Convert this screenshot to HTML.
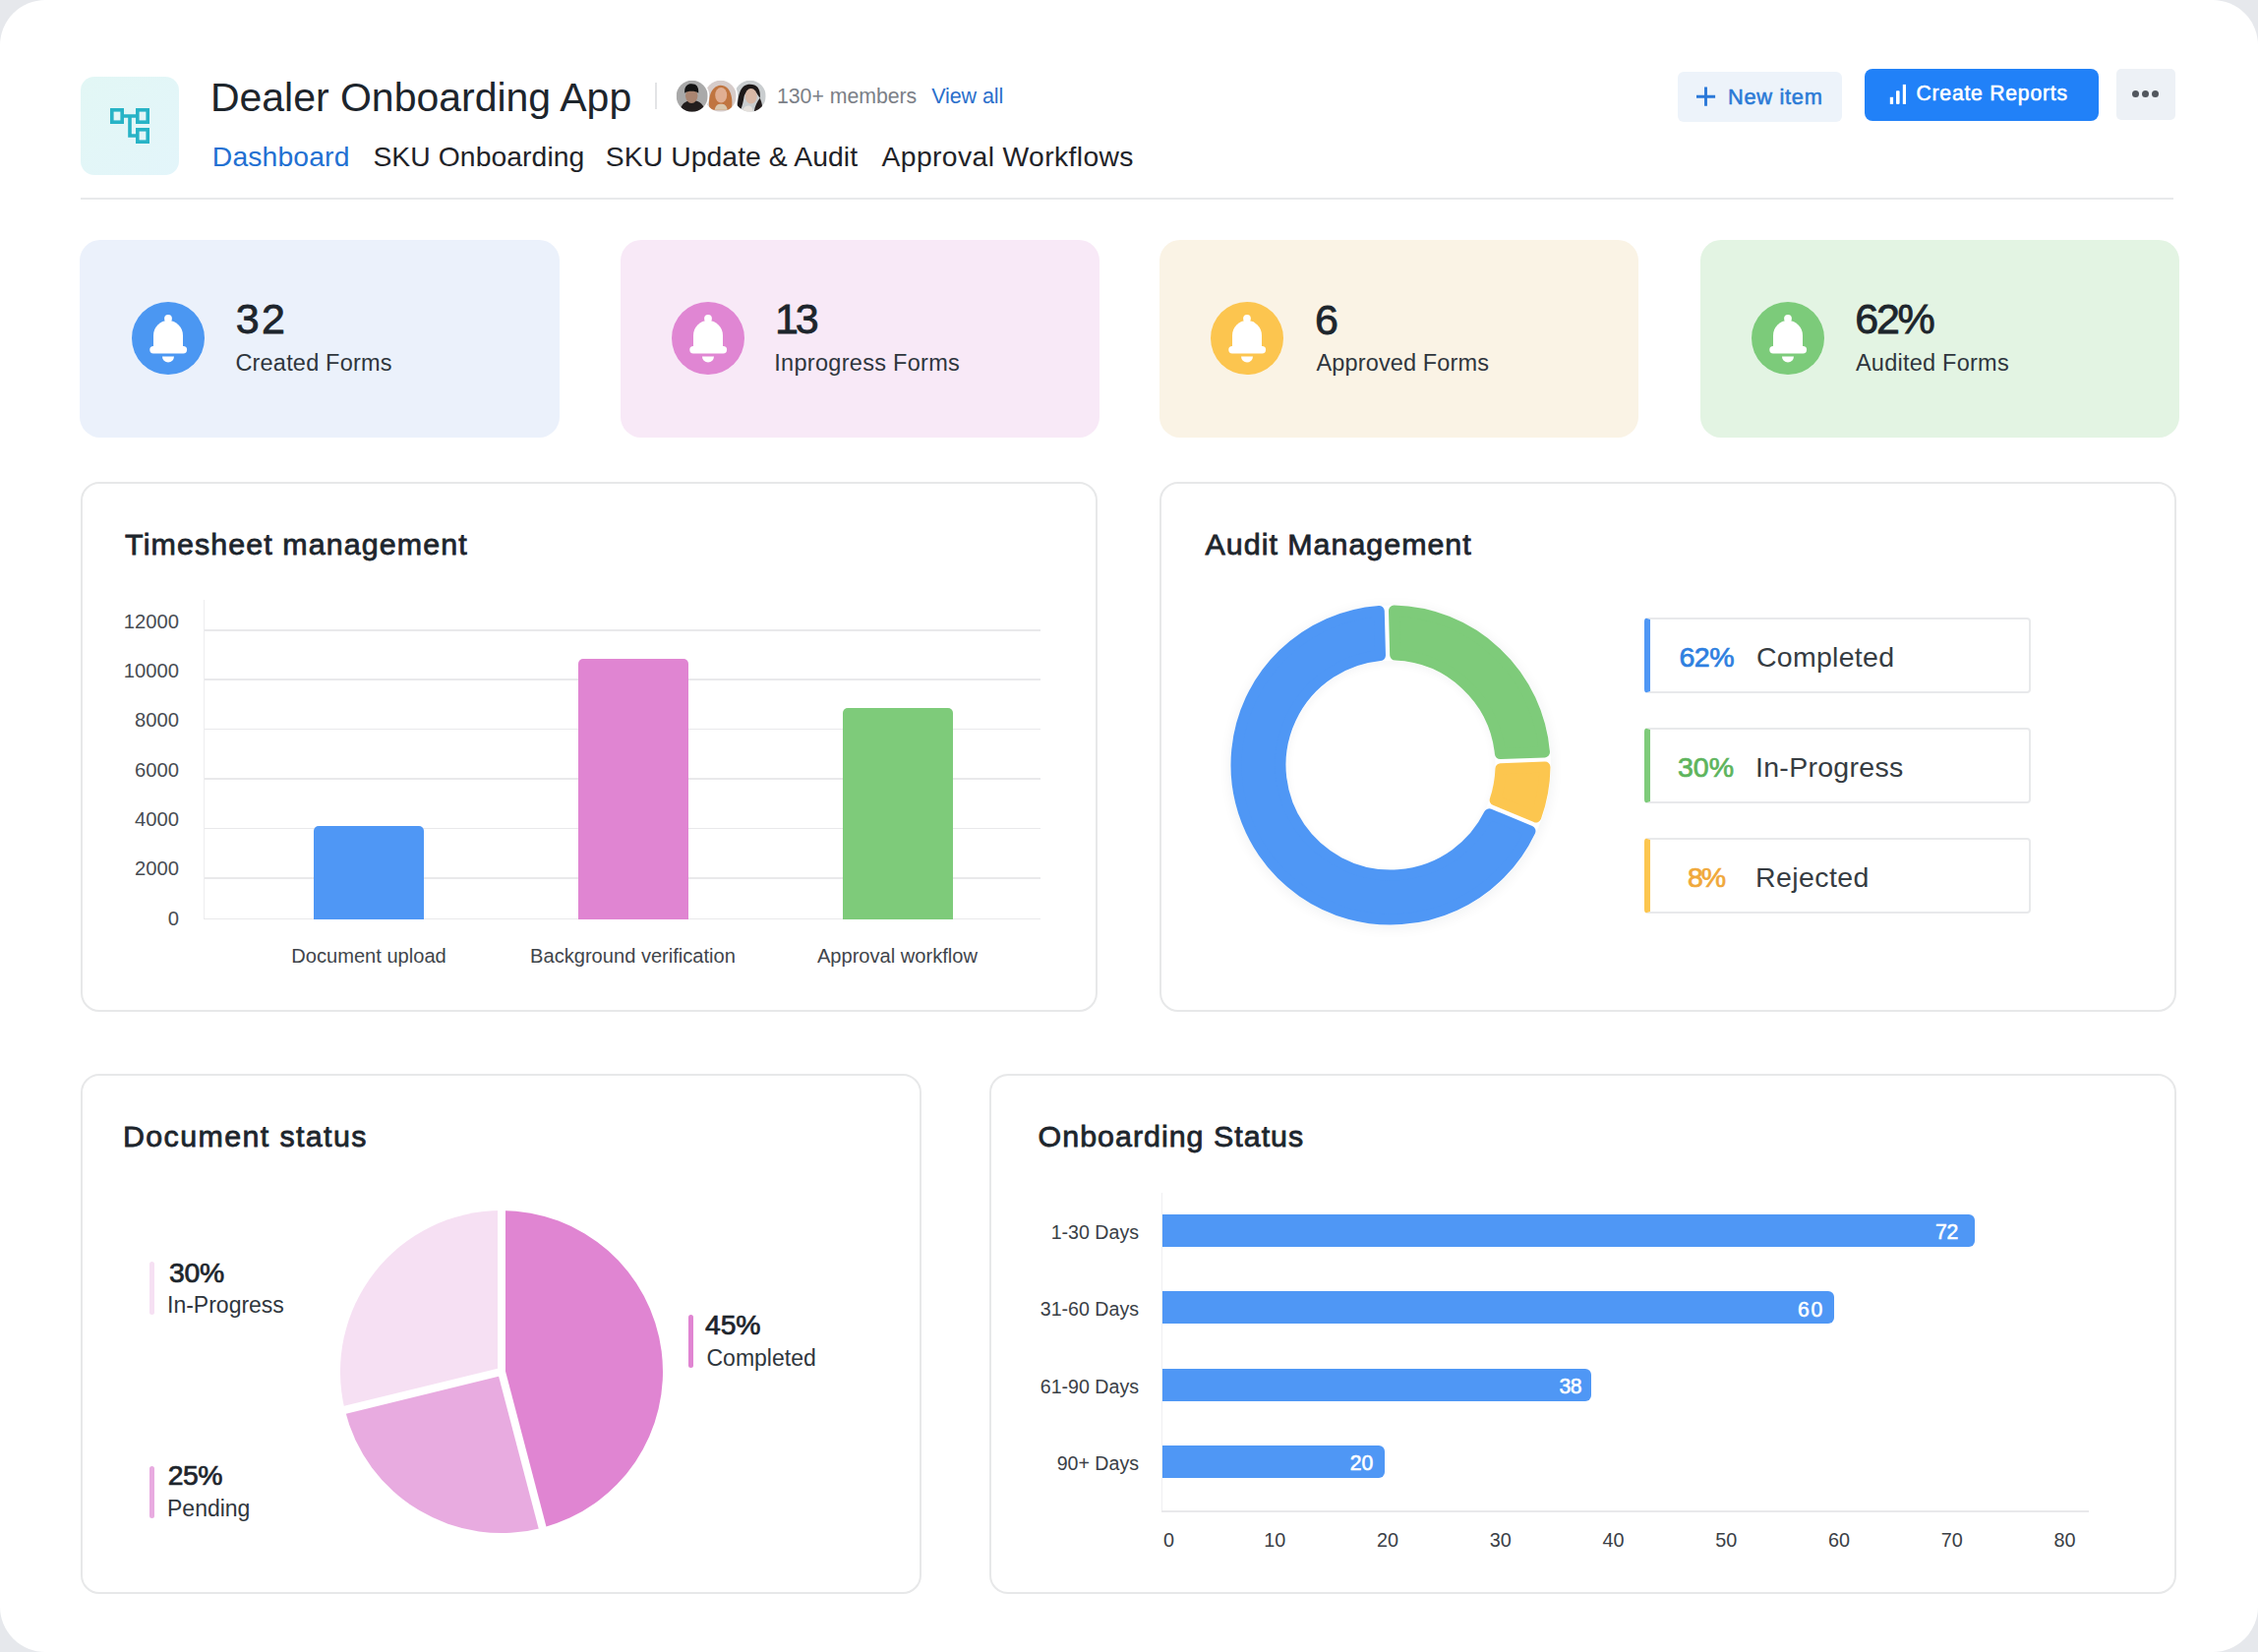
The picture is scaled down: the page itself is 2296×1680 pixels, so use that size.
<!DOCTYPE html>
<html><head><meta charset="utf-8"><style>
html,body{margin:0;padding:0;}
body{width:2296px;height:1680px;position:relative;overflow:hidden;background:#e6e8ec;font-family:"Liberation Sans", sans-serif;}
.t{position:absolute;white-space:nowrap;}
</style></head><body>
<div style="position:absolute;left:0.0px;top:0.0px;width:2296.0px;height:1680.0px;background:#fff;border-radius:46px;"></div>
<div style="position:absolute;left:82.0px;top:78.0px;width:100.0px;height:100.0px;background:linear-gradient(135deg,#e2f7f5,#e3f5fa);border-radius:14px;"></div>
<svg style="position:absolute;left:82px;top:78px" width="100" height="100" viewBox="0 0 100 100">
<g fill="none" stroke="#27b3c6" stroke-width="3.6">
<rect x="31.8" y="33.8" width="10.4" height="12.4"/>
<rect x="57.8" y="33.8" width="10.4" height="12.4"/>
<rect x="57.8" y="53.8" width="10.4" height="12.4"/>
<path d="M42 40 H58 M50 40 V60 H58"/>
</g></svg>
<div class="t" id="title" style="left:213.90px;top:79.09px;font-size:41px;line-height:41px;color:#1d252c;font-weight:400;letter-spacing:-0.010px;">Dealer Onboarding App</div>
<div style="position:absolute;left:665.5px;top:84.0px;width:2.0px;height:27.0px;background:#e3e4e6;"></div>
<svg style="position:absolute;left:685.9px;top:79.9px;z-index:3" width="35.4" height="35.4" viewBox="-1.7 -1.7 35.4 35.4"><defs><clipPath id="avc0"><circle cx="16" cy="16" r="16"/></clipPath></defs><circle cx="16" cy="16" r="17.6" fill="#fff"/><g clip-path="url(#avc0)"><rect width="32" height="32" fill="#a9a9a9"/><path d="M3 32 C5 24 9 21 15 20 C21 20 27 22 30 32 Z" fill="#221d1d"/><ellipse cx="15.5" cy="15.5" rx="6.2" ry="7.8" fill="#a98470"/><path d="M8.5 13 C8 6 11 3.5 15.5 3.5 C20.5 3.5 23 6.5 22.5 13 C20 10.5 11 10.5 8.5 13 Z" fill="#131313"/></g></svg>
<svg style="position:absolute;left:715.1px;top:79.9px;z-index:2" width="35.4" height="35.4" viewBox="-1.7 -1.7 35.4 35.4"><defs><clipPath id="avc1"><circle cx="16" cy="16" r="16"/></clipPath></defs><circle cx="16" cy="16" r="17.6" fill="#fff"/><g clip-path="url(#avc1)"><rect width="32" height="32" fill="#d6ccca"/><path d="M5 30 C3 20 5 6 16 5 C27 5 29 20 27 30 Z" fill="#c07540"/><ellipse cx="16.5" cy="15" rx="6" ry="7.8" fill="#e0ae92"/><path d="M10 30 C11 25 13 24 16.5 24 C20 24 22 25 23 30 Z" fill="#d9c7ad"/></g></svg>
<svg style="position:absolute;left:744.9px;top:79.9px;z-index:1" width="35.4" height="35.4" viewBox="-1.7 -1.7 35.4 35.4"><defs><clipPath id="avc2"><circle cx="16" cy="16" r="16"/></clipPath></defs><circle cx="16" cy="16" r="17.6" fill="#fff"/><g clip-path="url(#avc2)"><rect width="32" height="32" fill="#c9cdcf"/><path d="M3 28 C4 14 6 4 16 4 C24 4 27 10 26 18 L22 12 C18 10 12 10 10 16 C9 22 8 27 6 30 Z" fill="#1d1818"/><ellipse cx="17" cy="16" rx="6" ry="7.8" fill="#d8b8a6"/><path d="M20 32 C21 26 23 22 26 18 C28 22 29 27 28 32 Z" fill="#231c1c"/><path d="M8 32 C9 27 12 25 16 26 C18 27 19 29 19 32 Z" fill="#e4e0dc"/></g></svg>
<div class="t" id="members" style="left:790.00px;top:87.97px;font-size:21.3px;line-height:21.3px;color:#7b8087;font-weight:400;letter-spacing:-0.037px;">130+ members</div>
<div class="t" id="viewall" style="left:947.20px;top:87.80px;font-size:21.5px;line-height:21.5px;color:#2a6fcb;font-weight:400;letter-spacing:-0.086px;">View all</div>
<div class="t" id="nav1" style="left:215.80px;top:145.44px;font-size:28.3px;line-height:28.3px;color:#2270d2;font-weight:400;letter-spacing:0.150px;">Dashboard</div>
<div class="t" id="nav2" style="left:379.40px;top:145.44px;font-size:28.3px;line-height:28.3px;color:#1f2328;font-weight:400;letter-spacing:0.077px;">SKU Onboarding</div>
<div class="t" id="nav3" style="left:615.80px;top:145.44px;font-size:28.3px;line-height:28.3px;color:#1f2328;font-weight:400;letter-spacing:0.083px;">SKU Update &amp; Audit</div>
<div class="t" id="nav4" style="left:896.60px;top:145.44px;font-size:28.3px;line-height:28.3px;color:#1f2328;font-weight:400;letter-spacing:0.377px;">Approval Workflows</div>
<div style="position:absolute;left:1705.5px;top:72.5px;width:167.5px;height:51.5px;background:#edf3fa;border-radius:6px;"></div>
<svg style="position:absolute;left:1715px;top:80px" width="40" height="36" viewBox="1715 80 40 36"><path d="M1734.5 88.6V107.8M1725 98.3H1744.1" stroke="#2a78d8" stroke-width="2.9"/></svg>
<div class="t" id="newitem" style="left:1757.00px;top:87.55px;font-size:21.8px;line-height:21.8px;color:#2b7ad6;font-weight:400;letter-spacing:0.714px;-webkit-text-stroke:0.57px #2b7ad6;">New item</div>
<div style="position:absolute;left:1895.5px;top:70.0px;width:238.0px;height:53.0px;background:#2181f8;border-radius:8px;"></div>
<svg style="position:absolute;left:1910px;top:80px" width="40" height="30" viewBox="1910 80 40 30" fill="#fff"><rect x="1921.8" y="98.8" width="3.3" height="7.1"/><rect x="1928" y="92.2" width="3.6" height="13.7" rx="0.8"/><rect x="1934.8" y="85.9" width="3.2" height="20"/></svg>
<div class="t" id="create" style="left:1948.50px;top:84.25px;font-size:21.2px;line-height:21.2px;color:#ffffff;font-weight:400;letter-spacing:0.754px;-webkit-text-stroke:0.55px #ffffff;">Create Reports</div>
<div style="position:absolute;left:2151.5px;top:70.0px;width:60.0px;height:52.0px;background:#edf1f6;border-radius:5px;"></div>
<div style="position:absolute;left:2167.9px;top:92.10000000000001px;width:7.2px;height:7.2px;border-radius:50%;background:#52575e"></div>
<div style="position:absolute;left:2177.9px;top:92.10000000000001px;width:7.2px;height:7.2px;border-radius:50%;background:#52575e"></div>
<div style="position:absolute;left:2187.9px;top:92.10000000000001px;width:7.2px;height:7.2px;border-radius:50%;background:#52575e"></div>
<div style="position:absolute;left:82.0px;top:201.0px;width:2128.0px;height:2.0px;background:#e8e9eb;"></div>
<div style="position:absolute;left:81.0px;top:243.8px;width:487.5px;height:201.0px;background:#ebf1fb;border-radius:21px;"></div>
<svg style="position:absolute;left:133.6px;top:307px" width="74" height="74" viewBox="0 0 74 74"><circle cx="37" cy="37" r="37" fill="#4b97f2"/><path d="M22 34 A15 15 0 0 1 52 34 V45.5 H22 Z" fill="#fff"/>
<circle cx="37" cy="17" r="3.9" fill="#fff"/>
<rect x="18.3" y="45" width="37.8" height="7.4" rx="3.7" fill="#fff"/>
<path d="M31 55.6 A6 6 0 0 0 43 55.6 Z" fill="#fff"/></svg>
<div class="t" id="num0" style="left:239.80px;top:302.80px;font-size:43px;line-height:43px;color:#1d252c;font-weight:400;letter-spacing:2.200px;-webkit-text-stroke:0.80px #1d252c;">32</div>
<div class="t" id="lab0" style="left:239.40px;top:357.91px;font-size:23.5px;line-height:23.5px;color:#2f363d;font-weight:400;letter-spacing:0.200px;">Created Forms</div>
<div style="position:absolute;left:630.7px;top:243.8px;width:487.5px;height:201.0px;background:#f8e9f7;border-radius:21px;"></div>
<svg style="position:absolute;left:683.3px;top:307px" width="74" height="74" viewBox="0 0 74 74"><circle cx="37" cy="37" r="37" fill="#e086d3"/><path d="M22 34 A15 15 0 0 1 52 34 V45.5 H22 Z" fill="#fff"/>
<circle cx="37" cy="17" r="3.9" fill="#fff"/>
<rect x="18.3" y="45" width="37.8" height="7.4" rx="3.7" fill="#fff"/>
<path d="M31 55.6 A6 6 0 0 0 43 55.6 Z" fill="#fff"/></svg>
<div class="t" id="num1" style="left:787.90px;top:302.80px;font-size:43px;line-height:43px;color:#1d252c;font-weight:400;letter-spacing:-3.000px;-webkit-text-stroke:0.80px #1d252c;">13</div>
<div class="t" id="lab1" style="left:787.30px;top:357.91px;font-size:23.5px;line-height:23.5px;color:#2f363d;font-weight:400;letter-spacing:0.293px;">Inprogress Forms</div>
<div style="position:absolute;left:1178.5px;top:243.8px;width:487.5px;height:201.0px;background:#faf3e5;border-radius:21px;"></div>
<svg style="position:absolute;left:1231.1px;top:307px" width="74" height="74" viewBox="0 0 74 74"><circle cx="37" cy="37" r="37" fill="#fcc54f"/><path d="M22 34 A15 15 0 0 1 52 34 V45.5 H22 Z" fill="#fff"/>
<circle cx="37" cy="17" r="3.9" fill="#fff"/>
<rect x="18.3" y="45" width="37.8" height="7.4" rx="3.7" fill="#fff"/>
<path d="M31 55.6 A6 6 0 0 0 43 55.6 Z" fill="#fff"/></svg>
<div class="t" id="num2" style="left:1337.10px;top:303.80px;font-size:43px;line-height:43px;color:#1d252c;font-weight:400;letter-spacing:0.000px;-webkit-text-stroke:0.80px #1d252c;">6</div>
<div class="t" id="lab2" style="left:1338.50px;top:357.91px;font-size:23.5px;line-height:23.5px;color:#2f363d;font-weight:400;letter-spacing:0.138px;">Approved Forms</div>
<div style="position:absolute;left:1728.5px;top:243.8px;width:487.5px;height:201.0px;background:#e3f4e3;border-radius:21px;"></div>
<svg style="position:absolute;left:1781.1px;top:307px" width="74" height="74" viewBox="0 0 74 74"><circle cx="37" cy="37" r="37" fill="#7ccb7a"/><path d="M22 34 A15 15 0 0 1 52 34 V45.5 H22 Z" fill="#fff"/>
<circle cx="37" cy="17" r="3.9" fill="#fff"/>
<rect x="18.3" y="45" width="37.8" height="7.4" rx="3.7" fill="#fff"/>
<path d="M31 55.6 A6 6 0 0 0 43 55.6 Z" fill="#fff"/></svg>
<div class="t" id="num3" style="left:1886.30px;top:302.80px;font-size:43px;line-height:43px;color:#1d252c;font-weight:400;letter-spacing:-2.300px;-webkit-text-stroke:0.80px #1d252c;">62%</div>
<div class="t" id="lab3" style="left:1886.90px;top:357.91px;font-size:23.5px;line-height:23.5px;color:#2f363d;font-weight:400;letter-spacing:0.250px;">Audited Forms</div>
<div style="position:absolute;left:82.0px;top:490.0px;width:1034.0px;height:539.0px;border:2px solid #e7e8e9;border-radius:19px;box-sizing:border-box;background:#fff;"></div>
<div style="position:absolute;left:1179.0px;top:490.0px;width:1034.0px;height:539.0px;border:2px solid #e7e8e9;border-radius:19px;box-sizing:border-box;background:#fff;"></div>
<div style="position:absolute;left:82.0px;top:1092.0px;width:855.0px;height:529.0px;border:2px solid #e7e8e9;border-radius:19px;box-sizing:border-box;background:#fff;"></div>
<div style="position:absolute;left:1006.0px;top:1092.0px;width:1207.0px;height:529.0px;border:2px solid #e7e8e9;border-radius:19px;box-sizing:border-box;background:#fff;"></div>
<div class="t" id="h1" style="left:127.10px;top:538.27px;font-size:30.4px;line-height:30.4px;color:#1d252c;font-weight:400;letter-spacing:1.105px;-webkit-text-stroke:0.79px #1d252c;">Timesheet management</div>
<div class="t" style="right:2114.00px;top:621.70px;font-size:20.2px;line-height:20.2px;color:#474c52;font-weight:400;letter-spacing:0.000px;">12000</div>
<div class="t" style="right:2114.00px;top:672.03px;font-size:20.2px;line-height:20.2px;color:#474c52;font-weight:400;letter-spacing:0.000px;">10000</div>
<div class="t" style="right:2114.00px;top:722.36px;font-size:20.2px;line-height:20.2px;color:#474c52;font-weight:400;letter-spacing:0.000px;">8000</div>
<div class="t" style="right:2114.00px;top:772.69px;font-size:20.2px;line-height:20.2px;color:#474c52;font-weight:400;letter-spacing:0.000px;">6000</div>
<div class="t" style="right:2114.00px;top:823.02px;font-size:20.2px;line-height:20.2px;color:#474c52;font-weight:400;letter-spacing:0.000px;">4000</div>
<div class="t" style="right:2114.00px;top:873.35px;font-size:20.2px;line-height:20.2px;color:#474c52;font-weight:400;letter-spacing:0.000px;">2000</div>
<div class="t" style="right:2114.00px;top:923.68px;font-size:20.2px;line-height:20.2px;color:#474c52;font-weight:400;letter-spacing:0.000px;">0</div>
<div style="position:absolute;left:208.0px;top:640.0px;width:850.0px;height:1.5px;background:#e9e9eb;"></div>
<div style="position:absolute;left:208.0px;top:690.2px;width:850.0px;height:1.5px;background:#e9e9eb;"></div>
<div style="position:absolute;left:208.0px;top:740.8px;width:850.0px;height:1.5px;background:#e9e9eb;"></div>
<div style="position:absolute;left:208.0px;top:791.2px;width:850.0px;height:1.5px;background:#e9e9eb;"></div>
<div style="position:absolute;left:208.0px;top:841.6px;width:850.0px;height:1.5px;background:#e9e9eb;"></div>
<div style="position:absolute;left:208.0px;top:892.2px;width:850.0px;height:1.5px;background:#e9e9eb;"></div>
<div style="position:absolute;left:206.5px;top:610.0px;width:1.5px;height:325.0px;background:#ededef;"></div>
<div style="position:absolute;left:206.5px;top:933.8px;width:851.5px;height:1.7px;background:#e9e9eb;"></div>
<div style="position:absolute;left:319.2px;top:839.8px;width:111.6px;height:95.2px;background:#4f97f5;border-radius:5px 5px 0 0;"></div>
<div style="position:absolute;left:588.1px;top:669.5px;width:111.7px;height:265.5px;background:#e085d2;border-radius:5px 5px 0 0;"></div>
<div style="position:absolute;left:857.2px;top:720.0px;width:111.8px;height:215.0px;background:#7ecb7a;border-radius:5px 5px 0 0;"></div>
<div class="t" style="left:-625.00px;width:2000px;text-align:center;top:962.49px;font-size:20.1px;line-height:20.1px;color:#3f454b;font-weight:400;letter-spacing:0.000px;">Document upload</div>
<div class="t" style="left:-356.50px;width:2000px;text-align:center;top:962.49px;font-size:20.1px;line-height:20.1px;color:#3f454b;font-weight:400;letter-spacing:0.000px;">Background verification</div>
<div class="t" style="left:-87.60px;width:2000px;text-align:center;top:962.49px;font-size:20.1px;line-height:20.1px;color:#3f454b;font-weight:400;letter-spacing:0.000px;">Approval workflow</div>
<div class="t" id="h2" style="left:1225.60px;top:537.87px;font-size:30.4px;line-height:30.4px;color:#1d252c;font-weight:400;letter-spacing:1.000px;-webkit-text-stroke:0.79px #1d252c;">Audit Management</div>
<div style="position:absolute;left:1251.5px;top:615.5px;width:325.0px;height:325.0px;border-radius:50%;box-shadow:0 2px 14px rgba(30,40,60,0.07)"></div>
<div style="position:absolute;left:1307.5px;top:671.5px;width:213.0px;height:213.0px;border-radius:50%;background:#fff;box-shadow:inset 0 2px 10px rgba(30,40,60,0.05)"></div>
<svg style="position:absolute;left:1234px;top:598px" width="360" height="360" viewBox="-180 -180 360 360"><circle cx="0" cy="0" r="134.5" fill="none" stroke="#fff" stroke-width="56.0"/><path d="M3.49 -156.96 A157.0 157.0 0 0 1 156.46 -13.07 L111.41 -11.50 A112.0 112.0 0 0 0 4.67 -111.90 Z" fill="#7ecb7a" stroke="#7ecb7a" stroke-width="11.0" stroke-linejoin="round"/><path d="M156.99 2.12 A157.0 157.0 0 0 1 147.79 52.99 L106.14 35.74 A112.0 112.0 0 0 0 111.94 3.70 Z" fill="#fcc64f" stroke="#fcc64f" stroke-width="11.0" stroke-linejoin="round"/><path d="M141.97 67.03 A157.0 157.0 0 1 1 -11.70 -156.56 L-10.52 -111.50 A112.0 112.0 0 1 0 100.33 49.78 Z" fill="#4f97f5" stroke="#4f97f5" stroke-width="11.0" stroke-linejoin="round"/></svg>
<div style="position:absolute;left:1671.8px;top:628.0px;width:393.2px;height:76.5px;border:2px solid #e8e9eb;border-left:6px solid #4f97f5;border-radius:4px;box-sizing:border-box;background:#fff;"></div>
<div class="t" id="lp0" style="left:1707.50px;top:654.07px;font-size:28.5px;line-height:28.5px;color:#2e7fe0;font-weight:400;letter-spacing:-0.500px;-webkit-text-stroke:0.74px #2e7fe0;">62%</div>
<div class="t" id="ll0" style="left:1786.00px;top:654.07px;font-size:28.5px;line-height:28.5px;color:#363c42;font-weight:400;letter-spacing:0.275px;">Completed</div>
<div style="position:absolute;left:1671.8px;top:740.2px;width:393.2px;height:76.5px;border:2px solid #e8e9eb;border-left:6px solid #7ecb7a;border-radius:4px;box-sizing:border-box;background:#fff;"></div>
<div class="t" id="lp1" style="left:1706.00px;top:765.87px;font-size:28.5px;line-height:28.5px;color:#5db45c;font-weight:400;letter-spacing:0.000px;-webkit-text-stroke:0.74px #5db45c;">30%</div>
<div class="t" id="ll1" style="left:1785.00px;top:765.87px;font-size:28.5px;line-height:28.5px;color:#363c42;font-weight:400;letter-spacing:0.290px;">In-Progress</div>
<div style="position:absolute;left:1671.8px;top:852.0px;width:393.2px;height:76.5px;border:2px solid #e8e9eb;border-left:6px solid #fcc64f;border-radius:4px;box-sizing:border-box;background:#fff;"></div>
<div class="t" id="lp2" style="left:1715.90px;top:878.07px;font-size:28.5px;line-height:28.5px;color:#f0a83a;font-weight:400;letter-spacing:-2.000px;-webkit-text-stroke:0.74px #f0a83a;">8%</div>
<div class="t" id="ll2" style="left:1785.00px;top:878.07px;font-size:28.5px;line-height:28.5px;color:#363c42;font-weight:400;letter-spacing:0.414px;">Rejected</div>
<div class="t" id="h3" style="left:125.00px;top:1139.87px;font-size:30.4px;line-height:30.4px;color:#1d252c;font-weight:400;letter-spacing:1.386px;-webkit-text-stroke:0.79px #1d252c;">Document status</div>
<svg style="position:absolute;left:339.5px;top:1224.5px" width="340" height="340" viewBox="-170 -170 340 340"><path d="M0 0 L0.00 -164.00 A164 164 0 0 1 41.62 158.63 Z" fill="#e085d2"/><path d="M0 0 L41.62 158.63 A164 164 0 0 1 -159.33 38.84 Z" fill="#e8abe0"/><path d="M0 0 L-159.33 38.84 A164 164 0 0 1 -0.00 -164.00 Z" fill="#f6e0f3"/><line x1="0" y1="0" x2="0.00" y2="-170.00" stroke="#fff" stroke-width="8"/><line x1="0" y1="0" x2="43.14" y2="164.44" stroke="#fff" stroke-width="8"/><line x1="0" y1="0" x2="-165.16" y2="40.26" stroke="#fff" stroke-width="8"/></svg>
<div style="position:absolute;left:151.5px;top:1283.3px;width:5.0px;height:53.7px;background:#f6e0f3;border-radius:3px;"></div>
<div class="t" id="dp0" style="left:171.90px;top:1280.04px;font-size:28.3px;line-height:28.3px;color:#1d252c;font-weight:400;letter-spacing:-0.200px;-webkit-text-stroke:0.74px #1d252c;">30%</div>
<div class="t" style="left:170.00px;top:1315.53px;font-size:23px;line-height:23px;color:#2f363d;font-weight:400;letter-spacing:0.000px;">In-Progress</div>
<div style="position:absolute;left:151.5px;top:1490.5px;width:5.0px;height:53.8px;background:#e8abe0;border-radius:3px;"></div>
<div class="t" id="dp1" style="left:170.80px;top:1486.04px;font-size:28.3px;line-height:28.3px;color:#1d252c;font-weight:400;letter-spacing:-0.500px;-webkit-text-stroke:0.74px #1d252c;">25%</div>
<div class="t" style="left:170.00px;top:1522.93px;font-size:23px;line-height:23px;color:#2f363d;font-weight:400;letter-spacing:0.000px;">Pending</div>
<div style="position:absolute;left:700.0px;top:1337.0px;width:5.0px;height:54.0px;background:#e085d2;border-radius:3px;"></div>
<div class="t" id="dp2" style="left:717.10px;top:1333.04px;font-size:28.3px;line-height:28.3px;color:#1d252c;font-weight:400;letter-spacing:-0.200px;-webkit-text-stroke:0.74px #1d252c;">45%</div>
<div class="t" style="left:718.50px;top:1369.53px;font-size:23px;line-height:23px;color:#2f363d;font-weight:400;letter-spacing:0.000px;">Completed</div>
<div class="t" id="h4" style="left:1055.60px;top:1140.47px;font-size:30.4px;line-height:30.4px;color:#1d252c;font-weight:400;letter-spacing:1.012px;-webkit-text-stroke:0.79px #1d252c;">Onboarding Status</div>
<div style="position:absolute;left:1180.8px;top:1212.5px;width:1.5px;height:325.0px;background:#efeff1;"></div>
<div style="position:absolute;left:1180.8px;top:1536.2px;width:942.8px;height:1.6px;background:#e9e9eb;"></div>
<div style="position:absolute;left:1181.5px;top:1235.1px;width:826.3px;height:33.0px;background:#4f97f5;border-radius:0 6px 6px 0;"></div>
<div class="t" style="right:1138.00px;top:1244.01px;font-size:19.6px;line-height:19.6px;color:#3a4046;font-weight:400;letter-spacing:0.000px;">1-30 Days</div>
<div class="t" id="bv72" style="left:1968.10px;top:1242.45px;font-size:21.2px;line-height:21.2px;color:#ffffff;font-weight:400;letter-spacing:-0.400px;-webkit-text-stroke:0.55px #ffffff;">72</div>
<div style="position:absolute;left:1181.5px;top:1313.4px;width:683.3px;height:33.0px;background:#4f97f5;border-radius:0 6px 6px 0;"></div>
<div class="t" style="right:1138.00px;top:1322.31px;font-size:19.6px;line-height:19.6px;color:#3a4046;font-weight:400;letter-spacing:0.000px;">31-60 Days</div>
<div class="t" id="bv60" style="left:1828.00px;top:1320.65px;font-size:21.2px;line-height:21.2px;color:#ffffff;font-weight:400;letter-spacing:1.600px;-webkit-text-stroke:0.55px #ffffff;">60</div>
<div style="position:absolute;left:1181.5px;top:1391.8px;width:436.5px;height:33.0px;background:#4f97f5;border-radius:0 6px 6px 0;"></div>
<div class="t" style="right:1138.00px;top:1400.71px;font-size:19.6px;line-height:19.6px;color:#3a4046;font-weight:400;letter-spacing:0.000px;">61-90 Days</div>
<div class="t" id="bv38" style="left:1585.40px;top:1399.25px;font-size:21.2px;line-height:21.2px;color:#ffffff;font-weight:400;letter-spacing:-0.400px;-webkit-text-stroke:0.55px #ffffff;">38</div>
<div style="position:absolute;left:1181.5px;top:1470.0px;width:226.5px;height:33.0px;background:#4f97f5;border-radius:0 6px 6px 0;"></div>
<div class="t" style="right:1138.00px;top:1478.91px;font-size:19.6px;line-height:19.6px;color:#3a4046;font-weight:400;letter-spacing:0.000px;">90+ Days</div>
<div class="t" id="bv20" style="left:1372.70px;top:1477.05px;font-size:21.2px;line-height:21.2px;color:#ffffff;font-weight:400;letter-spacing:0.000px;-webkit-text-stroke:0.55px #ffffff;">20</div>
<div class="t" style="left:1182.90px;top:1556.84px;font-size:19.8px;line-height:19.8px;color:#3a4046;font-weight:400;letter-spacing:0.000px;">0</div>
<div class="t" style="left:296.26px;width:2000px;text-align:center;top:1556.84px;font-size:19.8px;line-height:19.8px;color:#3a4046;font-weight:400;letter-spacing:0.000px;">10</div>
<div class="t" style="left:411.02px;width:2000px;text-align:center;top:1556.84px;font-size:19.8px;line-height:19.8px;color:#3a4046;font-weight:400;letter-spacing:0.000px;">20</div>
<div class="t" style="left:525.78px;width:2000px;text-align:center;top:1556.84px;font-size:19.8px;line-height:19.8px;color:#3a4046;font-weight:400;letter-spacing:0.000px;">30</div>
<div class="t" style="left:640.54px;width:2000px;text-align:center;top:1556.84px;font-size:19.8px;line-height:19.8px;color:#3a4046;font-weight:400;letter-spacing:0.000px;">40</div>
<div class="t" style="left:755.30px;width:2000px;text-align:center;top:1556.84px;font-size:19.8px;line-height:19.8px;color:#3a4046;font-weight:400;letter-spacing:0.000px;">50</div>
<div class="t" style="left:870.06px;width:2000px;text-align:center;top:1556.84px;font-size:19.8px;line-height:19.8px;color:#3a4046;font-weight:400;letter-spacing:0.000px;">60</div>
<div class="t" style="left:984.82px;width:2000px;text-align:center;top:1556.84px;font-size:19.8px;line-height:19.8px;color:#3a4046;font-weight:400;letter-spacing:0.000px;">70</div>
<div class="t" style="left:1099.58px;width:2000px;text-align:center;top:1556.84px;font-size:19.8px;line-height:19.8px;color:#3a4046;font-weight:400;letter-spacing:0.000px;">80</div>
</body></html>
